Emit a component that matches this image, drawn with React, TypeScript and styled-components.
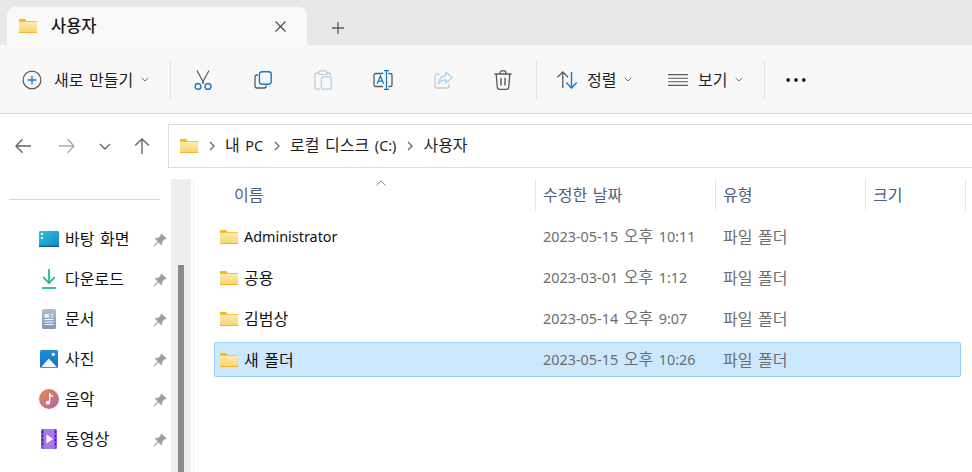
import React, { useId } from "react";
import styled, { createGlobalStyle } from "styled-components";

const Global = createGlobalStyle`
  html, body { margin: 0; padding: 0; background: #fff; overflow: hidden; }
  body { font-family: "Noto Sans", "Noto Sans CJK KR", sans-serif; color: #1a1a1a; word-spacing: 1.4px; }
  #root { width: 972px; height: 472px; overflow: hidden; }
`;

const Window = styled.div`
  width: 972px; height: 472px; display: flex; flex-direction: column; overflow: hidden; background: #fff;
`;
const TabStrip = styled.div`
  height: 45px; background: #e8e8e8; display: flex; align-items: flex-end; padding-left: 7px; flex: none;
`;
const Tab = styled.div`
  width: 300px; height: 38px; box-sizing: border-box; background: #f9f9f9; border-radius: 8px 8px 0 0;
  display: flex; align-items: center; padding: 0 0 0 12px;
`;
const TabTitle = styled.span`
  font-size: 16.5px; font-weight: 500; margin-left: 14px; flex: 1; line-height: 20px; color: #1b1b1b;
`;
const TabClose = styled.span`
  display: flex; margin-right: 21px; color: #444;
`;
const NewTab = styled.span`
  display: flex; margin: 0 0 11px 25px; color: #5c5c5c;
`;
const Toolbar = styled.div`
  height: 69px; box-sizing: border-box; background: #f8f8f8; border-bottom: 1px solid #dcdcdc;
  display: flex; align-items: center; padding: 1px 0 0 22px; flex: none;
`;
const NewButton = styled.div`
  display: flex; align-items: center; width: 128px; font-size: 16px; --gap: 12px;
`;
const ToolLabel = styled.span`
  line-height: 20px; color: #1f1f1f; margin-left: var(--gap, 10px); white-space: nowrap;
`;
const Chevron = styled.svg`
  margin-left: 8px; flex: none; color: #777;
`;
const Divider = styled.div<{ $left: number; $right: number }>`
  width: 1px; height: 40px; background: #e4e4e4; flex: none;
  margin-left: ${p => p.$left}px; margin-right: ${p => p.$right}px;
`;
const IconBtn = styled.div`
  width: 60px; height: 40px; display: flex; align-items: center; justify-content: center; flex: none;
`;
const MenuBtn = styled.div<{ $w: number }>`
  display: flex; align-items: center; flex: none; width: ${p => p.$w}px; font-size: 16px; --gap: 10px;
`;
const NavRow = styled.div`
  height: 44px; margin-top: 10px; display: flex; align-items: center; flex: none; width: 1000px;
`;
const NavIcons = styled.div`
  width: 168px; flex: none; display: flex; align-items: center; height: 100%;
`;
const NavBtn = styled.span<{ $w: number }>`
  width: ${p => p.$w}px; flex: none; display: flex; justify-content: center;
`;
const AddressBar = styled.div`
  flex: 1; height: 44px; box-sizing: border-box; border: 1px solid #dcdcdc; background: #fff;
  display: flex; align-items: center; padding-left: 11px; font-size: 16px;
`;
const Crumb = styled.span`
  color: #1e1e1e; line-height: 20px; white-space: nowrap; margin-bottom: 2px;
`;
const CrumbSep = styled.svg`
  margin: 0 10px 0 11px; flex: none; color: #666;
`;
const Latin = styled.span`
  font-size: 14.4px; word-spacing: 0;
`;
const Main = styled.div`
  flex: 1; min-height: 0; display: flex; margin-top: 11px;
`;
const Sidebar = styled.aside`
  width: 171px; flex: none; display: flex; flex-direction: column;
`;
const SideRule = styled.div`
  height: 1px; background: #d6d6d6; margin: 20px 11px 20px 9px; flex: none;
`;
const SideItem = styled.div`
  height: 40px; display: flex; align-items: center; padding-left: 39px; font-size: 16px; flex: none;
`;
const SideIcon = styled.span`
  width: 20px; height: 20px; margin-bottom: 2px; display: flex; align-items: center; justify-content: center; flex: none;
`;
const SideLabel = styled.span`
  flex: 1; margin: 0 0 2px 6px; line-height: 20px; color: #111; white-space: nowrap;
`;
const PinWrap = styled.span`
  display: flex; margin-right: 4px; flex: none;
`;
const Track = styled.div`
  width: 20px; flex: none; background: #eeeeee; display: flex; justify-content: center; padding-top: 86px; box-sizing: border-box;
`;
const Thumb = styled.div`
  width: 6px; height: 220px; background: #8a8a8a;
`;
const Pane = styled.section`
  flex: 1; min-width: 0; display: flex; flex-direction: column; margin-left: 2px; border-left: 1px solid #f0f0f0;
`;
const HeaderRow = styled.div`
  height: 32px; display: grid; grid-template-columns: 342px 180px 150px 100px; flex: none;
`;
const HeadCell = styled.div<{ $first?: boolean }>`
  height: 32px; box-sizing: border-box; display: flex; align-items: center; font-size: 16px; color: #4d6079;
  padding: 0 0 2px ${p => (p.$first ? 40 : 7)}px;
  border-right: 1px solid #e4e4e4; position: relative;
`;
const SortCaret = styled.svg`
  position: absolute; left: 182px; top: 1px; color: #888;
`;
const Rows = styled.div`
  margin: 8px 0 0 20px; width: 747px; display: flex; flex-direction: column; gap: 6px;
`;
const Row = styled.div<{ $selected?: boolean }>`
  height: 35px; box-sizing: border-box; display: grid; grid-template-columns: 321px 180px 1fr; align-items: center;
  border-radius: 2px; border: 1px solid ${p => (p.$selected ? "#99d1ff" : "transparent")};
  background: ${p => (p.$selected ? "#cce8ff" : "transparent")};
`;
const NameCell = styled.div`
  display: flex; align-items: center; padding-left: 5px; font-size: 16px; color: #111;
`;
const NameText = styled.span`
  margin-left: 6px; line-height: 20px; white-space: nowrap;
`;
const MetaCell = styled.div`
  padding-left: 7px; font-size: 16px; color: #6d6d6d; white-space: nowrap; line-height: 20px;
`;

const Folder = () => {
  const id = useId();
  return (
    <svg width="18" height="14" viewBox="0 0 18 14">
      <defs>
        <linearGradient id={id} x1="0" y1="0" x2="0" y2="1">
          <stop offset="0" stopColor="#fdeab0" />
          <stop offset="1" stopColor="#fbd468" />
        </linearGradient>
      </defs>
      <path d="M0 1C0 .4.4 0 1 0h4.400c.5 0 .8.2 1.100.5L8 2H0z" fill="#f9b518" />
      <rect x="0" y="2" width="18" height="1" fill="#fbc23a" />
      <path d="M0 3h18v10c0 .6-.4 1-1 1H1c-.6 0-1-.4-1-1z" fill={`url(#${id})`} />
      <rect x="0" y="13" width="18" height="1" fill="#f3b52c" />
    </svg>
  );
};

const SmallChevron = () => (
  <Chevron width="8" height="5" viewBox="0 0 8 5">
    <path d="M.6.8L4 4l3.400-3.200" fill="none" stroke="currentColor" strokeWidth="1" />
  </Chevron>
);

const Sep = () => (
  <CrumbSep width="6" height="10" viewBox="0 0 6 10">
    <path d="M1 1l4 4-4 4" fill="none" stroke="currentColor" strokeWidth="1.300" />
  </CrumbSep>
);

const G = "#5a5a5a";
const B = "#1578c9";
const PG = "#c9c9c9";
const PB = "#a9d3f2";

const PlusCircle = () => (
  <svg width="20" height="20" viewBox="0 0 20 20" fill="none">
    <circle cx="10" cy="10" r="8.900" stroke={G} strokeWidth="1.200" />
    <path d="M10 5.700v8.600M5.700 10h8.600" stroke={B} strokeWidth="1.300" />
  </svg>
);
const Scissors = () => (
  <svg width="18" height="20" viewBox="0 0 18 20" fill="none">
    <path d="M3 .5l7 13M15 .5l-7 13" stroke={G} strokeWidth="1.200" />
    <circle cx="4" cy="16.400" r="2.900" stroke={B} strokeWidth="1.400" />
    <circle cx="14" cy="16.400" r="2.900" stroke={B} strokeWidth="1.400" />
  </svg>
);
const Copy = () => (
  <svg width="18" height="18" viewBox="0 0 18 18" fill="none">
    <path d="M4 4H2.800C1.800 4 1 4.800 1 5.800v9C1 16.100 2 17 3.200 17h7c1.100 0 2-.9 2-2v-.6" stroke={G} strokeWidth="1.300" />
    <rect x="5.400" y=".8" width="11.800" height="12.400" rx="2.600" stroke={B} strokeWidth="1.400" />
  </svg>
);
const Paste = () => (
  <svg width="18" height="20" viewBox="0 0 18 20" fill="none">
    <path d="M4.500 3H2.600C1.700 3 1 3.700 1 4.600v12.800c0 .9.700 1.600 1.600 1.600h3M13 3h1.800c.9 0 1.600.7 1.600 1.600V6" stroke={PG} strokeWidth="1.300" />
    <rect x="4.800" y=".8" width="8" height="3.800" rx="1.600" stroke={PG} strokeWidth="1.300" />
    <rect x="7.400" y="6.800" width="9.800" height="12.400" rx="2" stroke={PB} strokeWidth="1.300" />
  </svg>
);
const Rename = () => (
  <svg width="20" height="20" viewBox="0 0 20 20" fill="none">
    <path d="M10 3.500H2.600C1.700 3.500 1 4.200 1 5.100v9.800c0 .9.700 1.600 1.600 1.600H10M15.500 3.500h1.900c.9 0 1.600.7 1.600 1.600v9.800c0 .9-.7 1.600-1.600 1.600h-1.900" stroke={G} strokeWidth="1.300" />
    <path d="M4.200 13.700L7.400 5.900l3.200 7.800M5.400 11.100h4" stroke={B} strokeWidth="1.300" />
    <path d="M13.500.5v19M11 .6h5M11 19.400h5" stroke={B} strokeWidth="1.300" />
  </svg>
);
const Share = () => (
  <svg width="19" height="18" viewBox="0 0 19 18" fill="none">
    <path d="M5.500 3H3C1.900 3 1 3.900 1 5v10c0 1.100.9 2 2 2h10c1.100 0 2-.9 2-2v-2" stroke={PG} strokeWidth="1.300" />
    <path d="M11.800 1l6.400 5.600-6.400 5.400V8.800C8.500 8.800 6 10 4.600 12.800 4.800 8.400 7.500 5.100 11.800 4.500z" stroke={PB} strokeWidth="1.300" strokeLinejoin="round" />
  </svg>
);
const Trash = () => (
  <svg width="18" height="20" viewBox="0 0 18 20" fill="none">
    <path d="M.5 4h17M6 4V3C6 1.700 7.300.7 9 .7s3 1 3 2.300v1M2.200 4l1 12.700c.1 1.400 1 2.600 2.400 2.600h6.800c1.400 0 2.300-1.200 2.400-2.600L15.800 4" stroke={G} strokeWidth="1.300" />
    <path d="M7 8v7.500M11 8v7.500" stroke={G} strokeWidth="1.400" />
  </svg>
);
const Sort = () => (
  <svg width="20" height="18" viewBox="0 0 20 18" fill="none">
    <path d="M.5 6.300L5.800 1l5.300 5.300M5.800 1.200V17" stroke={G} strokeWidth="1.300" />
    <path d="M9.300 11.500L14.500 17l5.200-5.500M14.500 16.800V1" stroke={B} strokeWidth="1.400" />
  </svg>
);
const ViewLines = () => (
  <svg width="20" height="12" viewBox="0 0 20 12" fill="none">
    <path d="M0 .6h20M0 4.200h20M0 7.800h20M0 11.400h20" stroke={G} strokeWidth="1.100" />
  </svg>
);
const Dots = () => (
  <svg width="20" height="6" viewBox="0 0 20 6">
    <circle cx="2.200" cy="3" r="1.900" fill="#222" />
    <circle cx="10" cy="3" r="1.900" fill="#222" />
    <circle cx="17.800" cy="3" r="1.900" fill="#222" />
  </svg>
);
const Arrow = ({ dir, color }: { dir: "l" | "r" | "u"; color: string }) => {
  const r = dir === "l" ? 0 : dir === "r" ? 180 : 90;
  return (
    <svg width="16" height="16" viewBox="0 0 16 16" fill="none" style={{ transform: `rotate(${r}deg)` }}>
      <path d="M7.600 1.200L1 8l6.600 6.800M1.200 8H16" stroke={color} strokeWidth="1.400" />
    </svg>
  );
};
const Pin = () => (
  <svg width="14" height="14" viewBox="0 0 14 14">
    <path d="M8.400.4l5.200 5.200-1 .9-.9-.2-2.600 2.600c.4 1.300.1 2.500-.7 3.400L5.500 9.400 1.500 13.300.7 13.300v-.8l4-4L1.800 5.600c.9-.8 2.100-1.100 3.400-.7L7.800 2.300l-.2-.9z" fill="#97a1a9" />
  </svg>
);
const Desktop = () => {
  const id = useId();
  return (
    <svg width="20" height="16" viewBox="0 0 20 16">
      <defs>
        <linearGradient id={id} x1="0" y1="0" x2="1" y2="1">
          <stop offset="0" stopColor="#2fc4de" />
          <stop offset="1" stopColor="#1584c4" />
        </linearGradient>
      </defs>
      <rect width="20" height="16" rx="1.200" fill={`url(#${id})`} />
      <rect y="14.500" width="20" height="1.500" fill="#125c9c" />
      <rect x="2" y="2" width="2" height="2" fill="#e4f6fb" />
      <rect x="2" y="6" width="2" height="2" fill="#e4f6fb" />
    </svg>
  );
};
const Download = () => (
  <svg width="14" height="20" viewBox="0 0 14 20" fill="none">
    <path d="M7 0v13.500M1.200 8.200L7 14l5.800-5.800" stroke="#1eb48c" strokeWidth="1.700" />
    <path d="M0 19h14" stroke="#17b58f" strokeWidth="1.700" />
  </svg>
);
const Doc = () => {
  const id = useId();
  return (
    <svg width="14" height="20" viewBox="0 0 14 20">
      <defs>
        <linearGradient id={id} x1="0" y1="0" x2="0" y2="1">
          <stop offset="0" stopColor="#a9bfd6" />
          <stop offset="1" stopColor="#7e97b6" />
        </linearGradient>
      </defs>
      <rect width="14" height="20" rx="1.500" fill={`url(#${id})`} />
      <path d="M2.500 5h4.500v3.500H2.500zM8.500 5h3v1h-3zM8.500 7.500h3v1h-3zM2.500 10h9v1h-9zM2.500 12.500h9v1h-9zM2.500 15h9v1h-9z" fill="#f2f6fa" />
    </svg>
  );
};
const Picture = () => {
  const id = useId();
  return (
    <svg width="18" height="18" viewBox="0 0 18 18">
      <defs>
        <linearGradient id={id} x1="0" y1="0" x2="0" y2="1">
          <stop offset="0" stopColor="#1e8fd8" />
          <stop offset="1" stopColor="#0f73c4" />
        </linearGradient>
      </defs>
      <rect width="18" height="18" rx="1.500" fill={`url(#${id})`} />
      <circle cx="13.300" cy="4.300" r="1.600" fill="#fff" />
      <path d="M1 17.200L8.800 8.400 17 17.200z" fill="#f4f8fb" />
    </svg>
  );
};
const Music = () => {
  const id = useId();
  return (
    <svg width="20" height="20" viewBox="0 0 20 20">
      <defs>
        <linearGradient id={id} x1="0" y1="0" x2="1" y2="1">
          <stop offset="0" stopColor="#f08a45" />
          <stop offset="1" stopColor="#a963b4" />
        </linearGradient>
      </defs>
      <circle cx="10" cy="10" r="10" fill={`url(#${id})`} />
      <path d="M10 4h1.300c.2 1.400 1.200 2.200 2.700 2.400v1.500c-1.100 0-2-.3-2.700-.9v6.300c0 1.500-1.100 2.400-2.500 2.400-1.200 0-2.100-.8-2.100-1.900 0-1.200 1.100-2 2.300-2 .4 0 .7.100 1 .2z" fill="#fff" />
    </svg>
  );
};
const Video = () => (
  <svg width="16" height="20" viewBox="0 0 16 20">
    <rect width="16" height="20" rx="1.500" fill="#8a4fdc" />
    <rect x="3" y="0" width="10" height="20" fill="#a878ea" />
    <path d="M5.500 5.500L12 10l-6.500 4.500z" fill="#fff" />
    <path d="M1 2h1v2H1zM1 6h1v2H1zM1 10h1v2H1zM1 14h1v2H1zM14 2h1v2h-1zM14 6h1v2h-1zM14 10h1v2h-1zM14 14h1v2h-1z" fill="#3a1f7a" />
  </svg>
);

const side = [
  { label: "바탕 화면", icon: <Desktop /> },
  { label: "다운로드", icon: <Download /> },
  { label: "문서", icon: <Doc /> },
  { label: "사진", icon: <Picture /> },
  { label: "음악", icon: <Music /> },
  { label: "동영상", icon: <Video /> },
];
const files = [
  { name: <Latin>Administrator</Latin>, key: "a", date: "2023-05-15", time: "10:11" },
  { name: "공용", key: "b", date: "2023-03-01", time: "1:12" },
  { name: "김범상", key: "c", date: "2023-05-14", time: "9:07" },
  { name: "새 폴더", key: "d", date: "2023-05-15", time: "10:26", selected: true },
];

export default function App() {
  return (
    <Window>
      <Global />
      <TabStrip>
        <Tab>
          <Folder />
          <TabTitle>사용자</TabTitle>
          <TabClose>
            <svg width="11" height="11" viewBox="0 0 11 11"><path d="M.5.5l10 10M10.500.5l-10 10" stroke="currentColor" strokeWidth="1.100" /></svg>
          </TabClose>
        </Tab>
        <NewTab>
          <svg width="12" height="12" viewBox="0 0 12 12"><path d="M6 0v12M0 6h12" stroke="currentColor" strokeWidth="1.300" /></svg>
        </NewTab>
      </TabStrip>
      <Toolbar>
        <NewButton>
          <PlusCircle />
          <ToolLabel>새로 만들기</ToolLabel>
          <SmallChevron />
        </NewButton>
        <Divider $left={20} $right={2} />
        <IconBtn><Scissors /></IconBtn>
        <IconBtn><Copy /></IconBtn>
        <IconBtn><Paste /></IconBtn>
        <IconBtn><Rename /></IconBtn>
        <IconBtn><Share /></IconBtn>
        <IconBtn><Trash /></IconBtn>
        <Divider $left={3} $right={20} />
        <MenuBtn $w={111}>
          <Sort />
          <ToolLabel>정렬</ToolLabel>
          <SmallChevron />
        </MenuBtn>
        <MenuBtn $w={96}>
          <ViewLines />
          <ToolLabel>보기</ToolLabel>
          <SmallChevron />
        </MenuBtn>
        <Divider $left={0} $right={21} />
        <Dots />
      </Toolbar>
      <NavRow>
        <NavIcons>
          <NavBtn $w={46}><Arrow dir="l" color="#666" /></NavBtn>
          <NavBtn $w={41}><Arrow dir="r" color="#aaa" /></NavBtn>
          <NavBtn $w={36}>
            <svg width="12" height="7" viewBox="0 0 12 7"><path d="M1 1l5 5 5-5" fill="none" stroke="#666" strokeWidth="1.400" /></svg>
          </NavBtn>
          <NavBtn $w={37}><Arrow dir="u" color="#666" /></NavBtn>
        </NavIcons>
        <AddressBar>
          <Folder />
          <Sep />
          <Crumb>내 <Latin>PC</Latin></Crumb>
          <Sep />
          <Crumb>로컬 디스크 <Latin>(C:)</Latin></Crumb>
          <Sep />
          <Crumb>사용자</Crumb>
        </AddressBar>
      </NavRow>
      <Main>
        <Sidebar>
          <SideRule />
          {side.map(s => (
            <SideItem key={s.label}>
              <SideIcon>{s.icon}</SideIcon>
              <SideLabel>{s.label}</SideLabel>
              <PinWrap><Pin /></PinWrap>
            </SideItem>
          ))}
        </Sidebar>
        <Track><Thumb /></Track>
        <Pane>
          <HeaderRow>
            <HeadCell $first>
              이름
              <SortCaret width="10" height="6" viewBox="0 0 10 6"><path d="M.6 5.400L5 1l4.400 4.400" fill="none" stroke="currentColor" strokeWidth="1" /></SortCaret>
            </HeadCell>
            <HeadCell>수정한 날짜</HeadCell>
            <HeadCell>유형</HeadCell>
            <HeadCell>크기</HeadCell>
          </HeaderRow>
          <Rows>
            {files.map(f => (
              <Row key={f.key} $selected={f.selected}>
                <NameCell>
                  <Folder />
                  <NameText>{f.name}</NameText>
                </NameCell>
                <MetaCell><Latin>{f.date}</Latin> 오후 <Latin>{f.time}</Latin></MetaCell>
                <MetaCell>파일 폴더</MetaCell>
              </Row>
            ))}
          </Rows>
        </Pane>
      </Main>
    </Window>
  );
}
